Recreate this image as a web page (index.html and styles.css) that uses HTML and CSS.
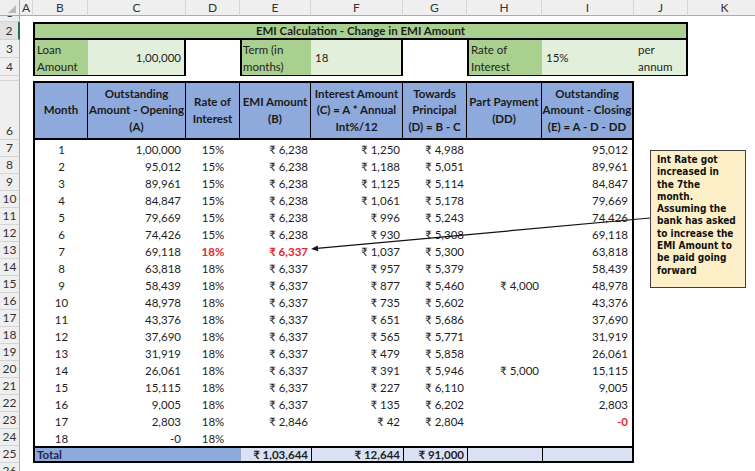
FILE: index.html
```html
<!DOCTYPE html>
<html>
<head>
<meta charset="utf-8">
<title>EMI Calculation - Change in EMI Amount</title>
<link rel="stylesheet" href="styles.css">
</head>
<body>
<div class="sheet">
  <div class="corner"></div>
  <div class="ch">A</div>
  <div class="ch">B</div>
  <div class="ch">C</div>
  <div class="ch">D</div>
  <div class="ch">E</div>
  <div class="ch">F</div>
  <div class="ch">G</div>
  <div class="ch">H</div>
  <div class="ch">I</div>
  <div class="ch">J</div>
  <div class="ch">K</div>

  <div class="rh">1</div>
  <div class="rh sel">2</div>
  <div class="rh">3</div>
  <div class="rh">4</div>
  <div class="rh">5</div>
  <div class="rh">6</div>
  <div class="rh">7</div>
  <div class="rh">8</div>
  <div class="rh">9</div>
  <div class="rh">10</div>
  <div class="rh">11</div>
  <div class="rh">12</div>
  <div class="rh">13</div>
  <div class="rh">14</div>
  <div class="rh">15</div>
  <div class="rh">16</div>
  <div class="rh">17</div>
  <div class="rh">18</div>
  <div class="rh">19</div>
  <div class="rh">20</div>
  <div class="rh">21</div>
  <div class="rh">22</div>
  <div class="rh">23</div>
  <div class="rh">24</div>
  <div class="rh">25</div>
  <div class="rh">26</div>

  <div class="title">EMI Calculation - Change in EMI Amount</div>

  <div class="box loan">
    <div class="lbl">Loan<br>Amount</div>
    <div class="val r">1,00,000</div>
  </div>
  <div class="box term">
    <div class="lbl">Term (in<br>months)</div>
    <div class="val">18</div>
  </div>
  <div class="box rate">
    <div class="lbl">Rate of<br>Interest</div>
    <div class="val">15%</div>
    <div class="val wrap">per<br>annum</div>
  </div>

  <div class="emi">
    <div class="hrow">
      <div>Month</div>
      <div>Outstanding<br>Amount - Opening<br>(A)</div>
      <div>Rate of<br>Interest</div>
      <div>EMI Amount<br>(B)</div>
      <div>Interest Amount<br>(C) = A * Annual<br>Int%/12</div>
      <div>Towards<br>Principal<br>(D) = B - C</div>
      <div>Part Payment<br>(DD)</div>
      <div>Outstanding<br>Amount - Closing<br>(E) = A - D - DD</div>
    </div>
    <div class="drow"><div>1</div><div>1,00,000</div><div>15%</div><div>₹ 6,238</div><div>₹ 1,250</div><div>₹ 4,988</div><div></div><div>95,012</div></div>
    <div class="drow"><div>2</div><div>95,012</div><div>15%</div><div>₹ 6,238</div><div>₹ 1,188</div><div>₹ 5,051</div><div></div><div>89,961</div></div>
    <div class="drow"><div>3</div><div>89,961</div><div>15%</div><div>₹ 6,238</div><div>₹ 1,125</div><div>₹ 5,114</div><div></div><div>84,847</div></div>
    <div class="drow"><div>4</div><div>84,847</div><div>15%</div><div>₹ 6,238</div><div>₹ 1,061</div><div>₹ 5,178</div><div></div><div>79,669</div></div>
    <div class="drow"><div>5</div><div>79,669</div><div>15%</div><div>₹ 6,238</div><div>₹ 996</div><div>₹ 5,243</div><div></div><div>74,426</div></div>
    <div class="drow"><div>6</div><div>74,426</div><div>15%</div><div>₹ 6,238</div><div>₹ 930</div><div>₹ 5,308</div><div></div><div>69,118</div></div>
    <div class="drow"><div>7</div><div>69,118</div><div class="neg">18%</div><div class="neg">₹ 6,337</div><div>₹ 1,037</div><div>₹ 5,300</div><div></div><div>63,818</div></div>
    <div class="drow"><div>8</div><div>63,818</div><div>18%</div><div>₹ 6,337</div><div>₹ 957</div><div>₹ 5,379</div><div></div><div>58,439</div></div>
    <div class="drow"><div>9</div><div>58,439</div><div>18%</div><div>₹ 6,337</div><div>₹ 877</div><div>₹ 5,460</div><div>₹ 4,000</div><div>48,978</div></div>
    <div class="drow"><div>10</div><div>48,978</div><div>18%</div><div>₹ 6,337</div><div>₹ 735</div><div>₹ 5,602</div><div></div><div>43,376</div></div>
    <div class="drow"><div>11</div><div>43,376</div><div>18%</div><div>₹ 6,337</div><div>₹ 651</div><div>₹ 5,686</div><div></div><div>37,690</div></div>
    <div class="drow"><div>12</div><div>37,690</div><div>18%</div><div>₹ 6,337</div><div>₹ 565</div><div>₹ 5,771</div><div></div><div>31,919</div></div>
    <div class="drow"><div>13</div><div>31,919</div><div>18%</div><div>₹ 6,337</div><div>₹ 479</div><div>₹ 5,858</div><div></div><div>26,061</div></div>
    <div class="drow"><div>14</div><div>26,061</div><div>18%</div><div>₹ 6,337</div><div>₹ 391</div><div>₹ 5,946</div><div>₹ 5,000</div><div>15,115</div></div>
    <div class="drow"><div>15</div><div>15,115</div><div>18%</div><div>₹ 6,337</div><div>₹ 227</div><div>₹ 6,110</div><div></div><div>9,005</div></div>
    <div class="drow"><div>16</div><div>9,005</div><div>18%</div><div>₹ 6,337</div><div>₹ 135</div><div>₹ 6,202</div><div></div><div>2,803</div></div>
    <div class="drow"><div>17</div><div>2,803</div><div>18%</div><div>₹ 2,846</div><div>₹ 42</div><div>₹ 2,804</div><div></div><div class="neg">-0</div></div>
    <div class="drow"><div>18</div><div>-0</div><div>18%</div><div></div><div></div><div></div><div></div><div></div></div>
    <div class="trow">
      <div class="tl">Total</div>
      <div class="tv first">₹ 1,03,644</div>
      <div class="tv">₹ 12,644</div>
      <div class="tv">₹ 91,000</div>
      <div class="tv"></div>
      <div class="tv"></div>
    </div>
  </div>

  <div class="note">Int Rate got<br>increased in<br>the 7the<br>month.<br>Assuming the<br>bank has asked<br>to increase the<br>EMI Amount to<br>be paid going<br>forward</div>

  <svg class="arrow" viewBox="0 0 755 471" xmlns="http://www.w3.org/2000/svg">
    <line x1="650" y1="218" x2="317" y2="248.4" stroke="#111" stroke-width="1.2"/>
    <polygon points="311,249 317.7,245.4 318.3,251.3" fill="#111"/>
  </svg>
</div>
</body>
</html>
```

FILE: styles.css
```css
* { box-sizing: border-box; }

html, body {
  margin: 0;
  padding: 0;
  background: #ffffff;
}

body {
  width: 755px;
  height: 471px;
  overflow: hidden;
  font-family: Lato, "Noto Sans", "DejaVu Sans", sans-serif;
  font-size: 11.5px;
  color: #1e1e1e;
}

.sheet {
  position: relative;
  display: grid;
  width: 762px;
  grid-template-columns: 20px 13px 55px 98px 54px 71px 92px 64px 75px 92px 54px 74px;
  grid-template-rows: 16px 6px 18px 18px 18px 5px 59px repeat(20, 17px);
}

/* sheet headers */
.corner {
  background: #efefef;
  border-right: 1px solid #ababab;
  border-bottom: 1px solid #ababab;
  display: flex;
  justify-content: flex-end;
  align-items: flex-end;
  padding: 0 3px 2px 0;
}
.corner::after {
  content: "";
  width: 0;
  height: 0;
  border-left: 8px solid transparent;
  border-bottom: 8px solid #b9b9b9;
}

.ch {
  background: #efefef;
  border-right: 1px solid #d4d4d4;
  border-bottom: 1px solid #ababab;
  text-align: center;
  font-size: 12px;
  line-height: 15px;
  color: #333333;
}

.rh {
  grid-column: 1;
  background: #efefef;
  border-right: 1px solid #ababab;
  border-bottom: 1px solid #d4d4d4;
  display: flex;
  justify-content: center;
  align-items: flex-end;
  font-size: 12px;
  line-height: 16px;
  color: #333333;
  overflow: hidden;
}
.rh.sel {
  background: #e2e2e2;
  border-right: 2px solid #217346;
}

/* top input blocks */
.title {
  grid-column: 3 / 12;
  grid-row: 3;
  background: #a9d08e;
  border: 2px solid #000000;
  font-weight: 700;
  text-align: center;
  line-height: 14px;
}

.box {
  border: 2px solid #000000;
  border-top: none;
  display: grid;
}
.loan { grid-column: 3 / 5; grid-row: 4 / 6; grid-template-columns: 53px 1fr; }
.term { grid-column: 6 / 8; grid-row: 4 / 6; grid-template-columns: 69px 1fr; }
.rate { grid-column: 9 / 12; grid-row: 4 / 6; grid-template-columns: 73px 92px 1fr; }

.lbl {
  background: #a9d08e;
  line-height: 17px;
  padding: 1px 0 0 2px;
  white-space: nowrap;
}
.term .lbl { padding-left: 1px; }

.val {
  background: #e2efda;
  display: flex;
  align-items: center;
  padding: 0 3px 0 4px;
}
.val.r { justify-content: flex-end; }
.val.wrap {
  display: block;
  line-height: 17px;
  padding-top: 1px;
}

/* main table */
.emi {
  grid-column: 3 / 11;
  grid-row: 7 / 27;
  border: 2px solid #000000;
  display: flex;
  flex-direction: column;
}

.hrow, .drow, .trow {
  display: grid;
  grid-template-columns: 53px 98px 54px 71px 92px 64px 75px 1fr;
}

.hrow {
  height: 57px;
  flex: none;
  background: #8ea9db;
  border-bottom: 2px solid #000000;
  font-weight: 700;
  color: #1a1a1a;
}
.hrow > div {
  display: flex;
  align-items: center;
  justify-content: center;
  text-align: center;
  line-height: 16.6px;
  border-right: 1px solid #000000;
  white-space: nowrap;
}
.hrow > div:last-child { border-right: none; }

.drow {
  height: 17px;
  flex: none;
}
.drow > div {
  padding-top: 2px;
  line-height: 15px;
  white-space: nowrap;
}
.drow > div:nth-child(1),
.drow > div:nth-child(3) { text-align: center; }
.drow > div:nth-child(2) { text-align: right; padding-right: 5px; }
.drow > div:nth-child(4),
.drow > div:nth-child(5),
.drow > div:nth-child(6),
.drow > div:nth-child(7) { text-align: right; padding-right: 3px; }
.drow > div:nth-child(8) { text-align: right; padding-right: 4px; }

.neg {
  color: #e3262b;
  font-weight: 700;
}

.trow {
  height: 15px;
  flex: none;
  border-top: 2px solid #000000;
  font-weight: 700;
  line-height: 13px;
}
.trow .tl {
  grid-column: 1 / 4;
  background: #8ea9db;
  padding-left: 2px;
  color: #1b2a4a;
}
.trow .tv {
  background: #d9e1f2;
  border-left: 1px solid #000000;
  text-align: right;
  padding-right: 3px;
  white-space: nowrap;
}
.trow .tv.first { border-left-color: #9aa6bf; }

/* comment callout + arrow (overlays) */
.note {
  position: absolute;
  left: 650px;
  top: 150px;
  width: 96px;
  height: 138px;
  background: #fdf0c8;
  border: 1px solid #404040;
  padding: 3px 0 0 6px;
  font-family: "DejaVu Sans Condensed", "DejaVu Sans", sans-serif;
  font-stretch: condensed;
  font-weight: 700;
  font-size: 10px;
  line-height: 12.3px;
  color: #111111;
  white-space: nowrap;
}

.arrow {
  position: absolute;
  left: 0;
  top: 0;
  width: 755px;
  height: 471px;
  pointer-events: none;
}
```
